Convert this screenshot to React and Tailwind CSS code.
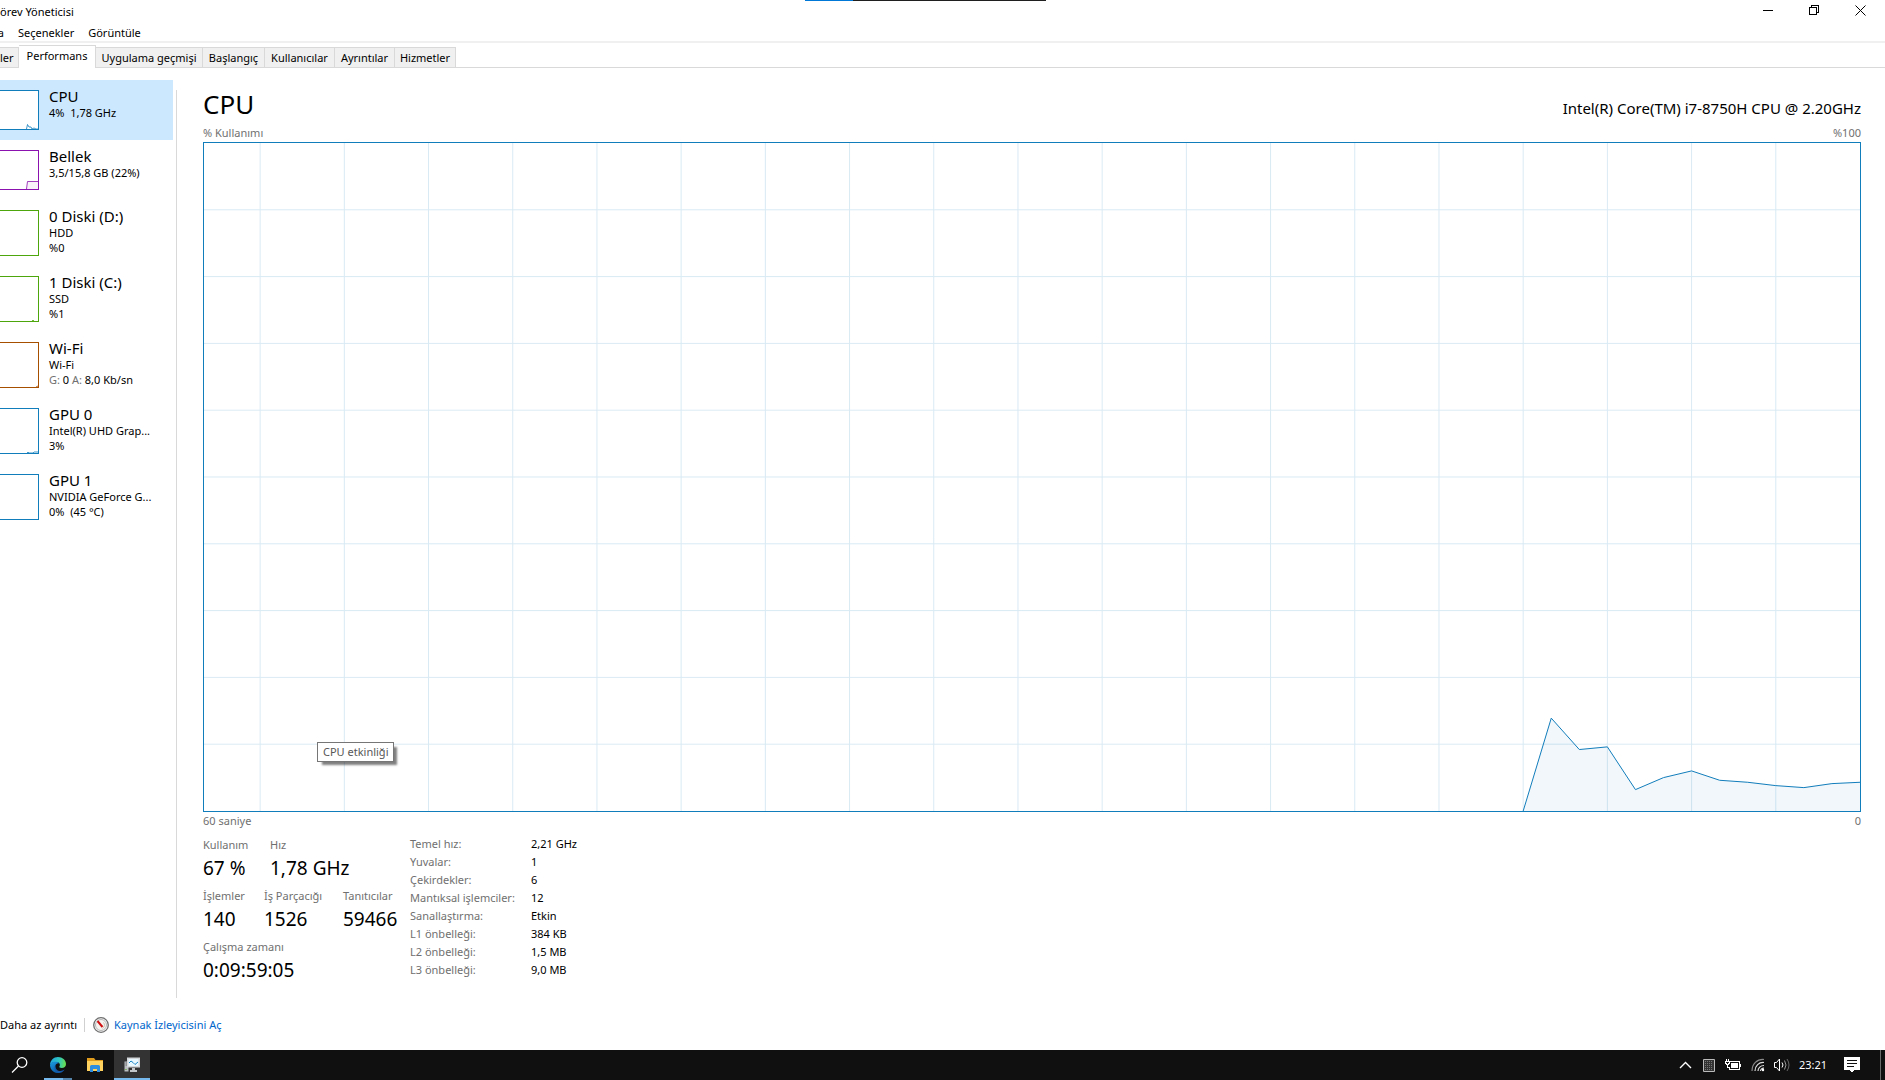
import clsx from 'clsx';

const tabs = [
    { label: 'ler', width: 'w-[19px]' },
    { label: 'Performans', width: 'w-[77px]', active: true },
    { label: 'Uygulama geçmişi', width: 'w-[107px]' },
    { label: 'Başlangıç', width: 'w-[62px]' },
    { label: 'Kullanıcılar', width: 'w-[70px]' },
    { label: 'Ayrıntılar', width: 'w-[60px]' },
    { label: 'Hizmetler', width: 'w-[61px]' },
];

const devices = [
    { name: 'CPU', lines: ['4%  1,78 GHz'], color: 'border-[#117dbb] text-[#117dbb]', spark: '26.5,38 27.5,33.5 29,36 31,36 32,38 34,37 36,38 39,38', active: true },
    { name: 'Bellek', lines: ['3,5/15,8 GB (22%)'], color: 'border-[#8b12ae] text-[#8b12ae]', spark: '26.5,38 27.5,30.5 39,30.5' },
    { name: '0 Diski (D:)', lines: ['HDD', '%0'], color: 'border-[#4da60c] text-[#4da60c]' },
    { name: '1 Diski (C:)', lines: ['SSD', '%1'], color: 'border-[#4da60c] text-[#4da60c]', spark: '32,44 33,43 34,44' },
    { name: 'Wi-Fi', lines: ['Wi-Fi'], net: ['0', '8,0 Kb/sn'], color: 'border-[#a74f01] text-[#a74f01]', spark: '36,44 38,43' },
    { name: 'GPU 0', lines: ['Intel(R) UHD Grap...', '3%'], color: 'border-[#117dbb] text-[#117dbb]', spark: '27,44 28,43 29,44 33,44 34,43 38,43' },
    { name: 'GPU 1', lines: ['NVIDIA GeForce G...', '0%  (45 °C)'], color: 'border-[#117dbb] text-[#117dbb]' },
];

const details = [
    ['Temel hız:', '2,21 GHz'],
    ['Yuvalar:', '1'],
    ['Çekirdekler:', '6'],
    ['Mantıksal işlemciler:', '12'],
    ['Sanallaştırma:', 'Etkin'],
    ['L1 önbelleği:', '384 KB'],
    ['L2 önbelleği:', '1,5 MB'],
    ['L3 önbelleği:', '9,0 MB'],
];

// one sample per second, the last one is "now"
const usage = [0, 13.9, 9.2, 9.6, 3.2, 5, 6, 4.6, 4.3, 3.8, 3.5, 4.1, 4.3];
const SECONDS = 59;

function UsageChart() {
    const start = SECONDS - usage.length + 1;
    const points = usage.map((v, i) => `${start + i},${100 - v}`).join(' ');
    const columns = Array.from({ length: 19 }, (_, i) => SECONDS - (i + 1) * 3);
    const rows = Array.from({ length: 9 }, (_, i) => (i + 1) * 10);

    return (
        <svg className="absolute inset-0 h-full w-full" viewBox={`0 0 ${SECONDS} 100`} preserveAspectRatio="none">
            <g stroke="#d9eaf4" shapeRendering="crispEdges">
                {columns.map((x) => (
                    <line key={x} x1={x} x2={x} y1="0" y2="100" vectorEffect="non-scaling-stroke" />
                ))}
                {rows.map((y) => (
                    <line key={y} x1="0" x2={SECONDS} y1={y} y2={y} vectorEffect="non-scaling-stroke" />
                ))}
            </g>
            <polygon points={`${start},100 ${points} ${SECONDS},100`} fill="#117dbb" fillOpacity="0.06" />
            <polyline points={points} fill="none" stroke="#117dbb" vectorEffect="non-scaling-stroke" />
        </svg>
    );
}

function WindowButtons() {
    return (
        <div className="flex pr-[2px]">
            <button type="button" aria-label="Simge durumuna küçült" className="flex h-5 w-[46px] items-center justify-center">
                <svg width="10" height="10" shapeRendering="crispEdges"><path d="M0 5.5h10" stroke="#000" /></svg>
            </button>
            <button type="button" aria-label="Önceki boyut" className="flex h-5 w-[46px] items-center justify-center">
                <svg width="10" height="10" fill="none" stroke="#000" shapeRendering="crispEdges">
                    <path d="M0.5 2.5h7v7h-7zM2.5 2V0.5h7v7H8" />
                </svg>
            </button>
            <button type="button" aria-label="Kapat" className="flex h-5 w-[46px] items-center justify-center">
                <svg width="11" height="11" stroke="#000"><path d="M0.5 0.5l10 10M10.5 0.5l-10 10" /></svg>
            </button>
        </div>
    );
}

function Device({ device }) {
    const tall = device.lines.length > 1 || device.net;

    return (
        <li>
            <button
                type="button"
                className={clsx(
                    'flex w-full items-start gap-[10px] pt-[10px] text-left',
                    tall ? 'h-[66px]' : 'h-[60px]',
                    device.active && 'bg-[#cce8ff]'
                )}
            >
                <svg
                    className={clsx('w-[39px] shrink-0 border-t border-r border-b bg-white', tall ? 'h-[46px]' : 'h-10', device.color)}
                    fill="none"
                    stroke="currentColor"
                >
                    {device.spark && <polyline points={device.spark} strokeOpacity="0.8" />}
                    {device.name === 'Bellek' && <path d="M28 30h11v9H27z" fill="#8b12ae" fillOpacity="0.06" stroke="none" />}
                </svg>
                <span className="flex flex-col">
                    <span className="h-[15px] text-[15px] leading-[13px]">{device.name}</span>
                    {device.lines.map((line) => (
                        <span key={line} className="text-[11px] leading-[15px] whitespace-pre">{line}</span>
                    ))}
                    {device.net && (
                        <span className="text-[11px] leading-[15px] whitespace-pre">
                            <span className="text-[#707070]">G: </span>{device.net[0]}
                            <span className="text-[#707070]"> A: </span>{device.net[1]}
                        </span>
                    )}
                </span>
            </button>
        </li>
    );
}

function Stat({ label, value, className }) {
    return (
        <div className={clsx('h-[51px]', className)}>
            <dt className="text-[11px] leading-[20px] text-[#707070]">{label}</dt>
            <dd className="text-[19px] leading-[27px]">{value}</dd>
        </div>
    );
}

function EdgeIcon() {
    return (
        <svg width="16" height="16" viewBox="0 0 16 16">
            <defs>
                <linearGradient id="edgeTop" x1="0" y1="0.4" x2="1" y2="0.5">
                    <stop offset="0" stopColor="#1fa3e0" />
                    <stop offset="0.55" stopColor="#2fc6c0" />
                    <stop offset="1" stopColor="#6be04a" />
                </linearGradient>
                <linearGradient id="edgeLeft" x1="0" y1="0" x2="0.6" y2="1">
                    <stop offset="0" stopColor="#1b9de2" />
                    <stop offset="1" stopColor="#0b5aa5" />
                </linearGradient>
            </defs>
            <path d="M0 8C0.2 3.4 3.6 0 8 0s8 3.2 8 7c0 2.5-1.8 4-4.200 4-2 0-3-.8-2.300-1.700.8-1.200.5-3.800-2.500-4.300C4 4.500 1 5.500 0 8z" fill="url(#edgeTop)" />
            <path d="M0 8c.6-2 2.500-3.200 5-3.200 1.800 0 3.200.5 4 1.400C6.500 6 5 7.500 5.200 10c.3 3 2.800 5 5.300 5.600A8 8 0 0 1 0 8z" fill="url(#edgeLeft)" />
            <path d="M6 7.500c-1 1.300-.8 3.500.6 4.900 2 2 5.400 2 8 .1C13.400 15 10.800 16 8.500 16 5.500 15 4.300 12.500 4.500 10.500 4.600 9.300 5.200 8.100 6 7.500z" fill="#1459a8" />
        </svg>
    );
}

function FolderIcon() {
    return (
        <svg width="16" height="14" viewBox="0 0 16 14">
            <path d="M0 0h7l1.500 2H16v3H0z" fill="#e09c1c" />
            <path d="M0 3h16v10H0z" fill="#ffd25f" />
            <path d="M3 14V8.500Q3 7 4.500 7h7Q13 7 13 8.500V14h-3v-3H6v3z" fill="#2f8de0" />
        </svg>
    );
}

function TaskManagerIcon() {
    return (
        <svg width="17" height="16" viewBox="0 0 17 16">
            <path d="M0.500 4.500h4v10h-4z" fill="#b9bdc0" />
            <path d="M1.500 6h2M1.500 8h2" stroke="#666" />
            <path d="M1.500 12.500h1" stroke="#4da60c" />
            <path d="M3 0.500h13v10H3z" fill="#d4d7d9" />
            <path d="M4.500 2h10v7h-10z" fill="#e9f7ff" />
            <path d="M5 6l2-2 2 1.500 2 2L14 5" fill="none" stroke="#1b86c4" />
            <path d="M8 11h3v2h2v2H6v-2h2z" fill="#c3c6c8" />
        </svg>
    );
}

function GaugeIcon() {
    return (
        <svg width="16" height="16" viewBox="0 0 16 16">
            <circle cx="8" cy="8" r="7.300" fill="#fafafa" stroke="#6e6e6e" strokeWidth="1.300" />
            <circle cx="8" cy="8" r="5.500" fill="#f6f4f1" stroke="#b7b7b7" />
            <path d="M10.500 5.500a4 4 0 0 1-1 6" fill="none" stroke="#cdbfae" />
            <path d="M4.500 4L9.500 10" fill="none" stroke="#d01010" strokeWidth="2" />
        </svg>
    );
}

function Taskbar() {
    return (
        <footer className="flex h-[30px] shrink-0 justify-between bg-[#101010] text-white">
            <div className="flex">
                <button type="button" aria-label="Ara" className="flex w-10 items-center justify-center pr-[2px]">
                    <svg width="17" height="16" fill="none" stroke="#fff" strokeWidth="1.300">
                        <circle cx="11" cy="5.500" r="4.800" />
                        <path d="M7.500 9L1 15.500" />
                    </svg>
                </button>
                <button type="button" aria-label="Microsoft Edge" className="relative flex w-9 items-center justify-center">
                    <EdgeIcon />
                    <span className="absolute bottom-0 left-1 flex h-[2px] w-7">
                        <span className="flex-1 bg-[#76b9ed]" />
                        <span className="w-[9px] bg-[#5685ab]" />
                    </span>
                </button>
                <button type="button" aria-label="Dosya Gezgini" className="flex w-[38px] items-center justify-center">
                    <FolderIcon />
                </button>
                <button type="button" aria-label="Görev Yöneticisi" className="flex w-9 items-center justify-center border-y-2 border-t-[#333333] border-b-[#76b9ed] bg-[#333333]">
                    <TaskManagerIcon />
                </button>
            </div>

            <div className="flex items-center">
                <button type="button" aria-label="Gizli simgeler" className="flex w-6 justify-center">
                    <svg width="13" height="8" fill="none" stroke="#fff" strokeWidth="1.400"><path d="M1 7l5.500-5.500L12 7" /></svg>
                </button>
                <button type="button" aria-label="Dokunmatik yüzey" className="flex w-6 justify-center">
                    <svg width="12" height="13">
                        <path d="M0.500 0.500h11v12h-11z" fill="#333" stroke="#bbb" />
                        <path d="M2.500 2v10M4.500 2v10M6.500 2v10M8.500 2v10" stroke="#777" strokeDasharray="1 1" />
                    </svg>
                </button>
                <button type="button" aria-label="Pil" className="flex w-6 justify-center">
                    <svg width="16" height="12" fill="none" stroke="#fff" shapeRendering="crispEdges">
                        <path d="M5 2.500h9.500v8h-10V8M15.500 5v3M1.500 0v2M3.500 0v2M0.500 2.500h4v2h-1v1h-2v-1h-1zM2.500 6v2.500h2" />
                        <path d="M6 4h7v5H6z" fill="#fff" stroke="none" />
                    </svg>
                </button>
                <button type="button" aria-label="Wi-Fi" className="flex w-[25px] justify-center">
                    <svg width="14" height="14" fill="none" stroke="#ddd" strokeWidth="1.200">
                        <path d="M1 13C1 6 6 1 13 1.500" stroke="#888" />
                        <path d="M4 13C4 8 8 4 13 4.500M7 13C7 10 9.500 7.500 13 7.500M9.500 13C9.500 11.500 11 10 13 10.200" />
                        <circle cx="12" cy="12" r="1.200" fill="#fff" stroke="none" />
                    </svg>
                </button>
                <button type="button" aria-label="Ses" className="flex w-6 justify-center">
                    <svg width="17" height="14" fill="none" stroke="#fff">
                        <path d="M0.500 4.500h2l3-3.500v12l-3-3.500h-2z" />
                        <path d="M8 4.500q2 2.500 0 5" />
                        <path d="M10.500 2.500q3 4.500 0 9" stroke="#999" />
                        <path d="M13 1q4 6 0 12" stroke="#666" />
                    </svg>
                </button>
                <button type="button" className="w-[38px] text-center text-[11px] leading-4">23:21</button>
                <button type="button" aria-label="Bildirimler" className="flex w-10 justify-center">
                    <svg width="16" height="16" shapeRendering="crispEdges">
                        <path d="M0 0h16v13h-6l-2 3-2-3H0z" fill="#fff" />
                        <path d="M3 3.500h10M3 6.500h10M3 9.500h7" stroke="#101010" />
                    </svg>
                </button>
                <span className="mr-1 ml-2 h-full w-px bg-[#6a6a6a]" />
            </div>
        </footer>
    );
}

export default function App() {
    return (
        <div className="relative flex min-h-screen flex-col bg-white font-['Noto_Sans','Open_Sans',sans-serif] text-black">
            {/* strip of another window along the top edge */}
            <div className="absolute top-0 left-[805px] flex h-px w-[241px] bg-[#1f1f1f]">
                <span className="w-12 bg-[#0078d7]" />
            </div>

            <header className="flex h-[22px] items-start justify-between">
                <h1 className="pt-1 text-[11px] leading-4">örev Yöneticisi</h1>
                <WindowButtons />
            </header>
            <nav className="flex h-[21px] gap-[14px] border-b-2 border-[#f0f0f0] text-[11px] leading-[21px]">
                <button type="button" className="flex w-1 justify-end">a</button>
                <button type="button">Seçenekler</button>
                <button type="button">Görüntüle</button>
            </nav>

            <div role="tablist" className="flex h-[25px] items-end border-b border-[#d9d9d9] text-[11px]">
                {tabs.map((tab) => (
                    <button
                        key={tab.label}
                        type="button"
                        role="tab"
                        aria-selected={!!tab.active}
                        className={clsx(
                            'flex shrink-0 border-t border-r border-[#d9d9d9] whitespace-nowrap first:justify-start',
                            'justify-center',
                            tab.width,
                            tab.active ? '-mb-px h-[23px] bg-white leading-[20px]' : 'h-5 bg-[#f0f0f0] leading-[20px]'
                        )}
                    >
                        {tab.label}
                    </button>
                ))}
            </div>

            <div className="flex flex-1 pt-3">
                <ul className="w-[173px] shrink-0">
                    {devices.map((device) => (
                        <Device key={device.name} device={device} />
                    ))}
                </ul>

                <main className="mt-[10px] ml-[3px] flex flex-1 flex-col border-l border-[#d9d9d9] pr-6 pl-[26px]">
                    <div className="flex h-9 items-start justify-between">
                        <h2 className="text-[26px] leading-7">CPU</h2>
                        <p className="pt-[6px] text-[15px] leading-6">Intel(R) Core(TM) i7-8750H CPU @ 2.20GHz</p>
                    </div>
                    <div className="flex h-4 justify-between text-[11px] leading-[14px] text-[#707070]">
                        <span>% Kullanımı</span>
                        <span>%100</span>
                    </div>
                    <div className="relative flex-1 border border-[#117dbb]">
                        <UsageChart />
                        <div role="tooltip" className="absolute bottom-[49px] left-[113px] h-5 border border-[#767676] bg-white px-[5px] text-[11px] leading-[17px] text-[#575757] shadow-[4px_4px_2px_-1px_#00000080]">
                            CPU etkinliği
                        </div>
                    </div>
                    <div className="flex h-[23px] justify-between text-[11px] leading-[18px] text-[#707070]">
                        <span>60 saniye</span>
                        <span>0</span>
                    </div>

                    <div className="flex h-[163px]">
                        <dl className="w-[207px]">
                            <div className="flex">
                                <Stat label="Kullanım" value="67 %" className="w-[67px]" />
                                <Stat label="Hız" value="1,78 GHz" />
                            </div>
                            <div className="flex">
                                <Stat label="İşlemler" value="140" className="w-[61px]" />
                                <Stat label="İş Parçacığı" value="1526" className="w-[79px]" />
                                <Stat label="Tanıtıcılar" value="59466" />
                            </div>
                            <Stat label="Çalışma zamanı" value="0:09:59:05" />
                        </dl>
                        <table className="h-36 text-left text-[11px] leading-[18px]">
                            <tbody>
                                {details.map(([label, value]) => (
                                    <tr key={label}>
                                        <th scope="row" className="w-[121px] p-0 font-normal text-[#707070]">{label}</th>
                                        <td className="p-0 whitespace-nowrap">{value}</td>
                                    </tr>
                                ))}
                            </tbody>
                        </table>
                    </div>
                </main>
            </div>

            <div className="flex h-[52px] items-center pt-[2px] text-[11px]">
                <button type="button" className="w-[84px] text-left whitespace-nowrap">Daha az ayrıntı</button>
                <span className="mr-2 h-[14px] w-px bg-[#d0d0d0]" />
                <a href="#" className="flex items-center gap-[5px] text-[#0066cc]">
                    <GaugeIcon />
                    Kaynak İzleyicisini Aç
                </a>
            </div>

            <Taskbar />
        </div>
    );
}
